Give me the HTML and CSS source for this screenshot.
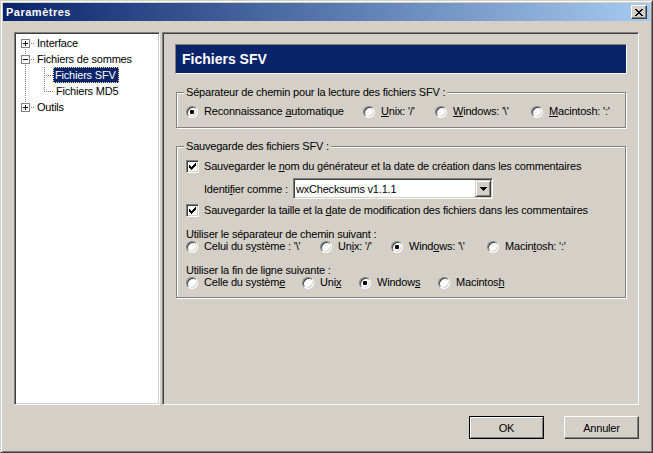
FILE: index.html
```html
<!DOCTYPE html>
<html lang="fr">
<head>
<meta charset="utf-8">
<title>Paramètres</title>
<link rel="stylesheet" href="styles.css">
</head>
<body>
<div class="window">
  <div class="titlebar">
    <span class="title">Paramètres</span>
    <button class="close" aria-label="Fermer"><svg width="8" height="7" viewBox="0 0 8 7" shape-rendering="crispEdges"><path fill="#000" d="M0 0h2v1H0z M6 0h2v1H6z M1 1h2v1H1z M5 1h2v1H5z M2 2h4v1H2z M3 3h2v1H3z M2 4h4v1H2z M1 5h2v1H1z M5 5h2v1H5z M0 6h2v1H0z M6 6h2v1H6z"/></svg></button>
  </div>
  <div class="client">
    <div class="main">
      <div class="tree">
        <div class="node">
          <span class="g lo hz"><span class="exp plus"></span></span>
          <span class="label">Interface</span>
        </div>
        <div class="node">
          <span class="g full hz"><span class="exp"></span></span>
          <span class="label">Fichiers de sommes</span>
        </div>
        <div class="node">
          <span class="g full"></span>
          <span class="g full hz"></span>
          <span class="label sel">Fichiers SFV</span>
        </div>
        <div class="node">
          <span class="g full"></span>
          <span class="g up hz"></span>
          <span class="label">Fichiers MD5</span>
        </div>
        <div class="node">
          <span class="g up hz"><span class="exp plus"></span></span>
          <span class="label">Outils</span>
        </div>
      </div>
      <div class="page">
        <div class="page-head">Fichiers SFV</div>
        <fieldset class="group g1">
          <legend>Séparateur de chemin pour la lecture des fichiers SFV :</legend>
          <div class="row">
            <label class="opt w177"><span class="radio on"></span><span>Reconnaissance <u>a</u>utomatique</span></label>
            <label class="opt w72"><span class="radio"></span><span><u>U</u>nix: '/'</span></label>
            <label class="opt w96"><span class="radio"></span><span><u>W</u>indows: '\'</span></label>
            <label class="opt"><span class="radio"></span><span><u>M</u>acintosh: ':'</span></label>
          </div>
        </fieldset>
        <fieldset class="group g2">
          <legend>Sauvegarde des fichiers SFV :</legend>
          <label class="opt cb1"><span class="check"><svg width="7" height="7" viewBox="0 0 7 7" shape-rendering="crispEdges"><path fill="#000" d="M6 0h1v1H6z M5 1h2v1H5z M0 2h1v1H0z M4 2h3v1H4z M0 3h2v1H0z M3 3h3v1H3z M0 4h5v1H0z M1 5h3v1H1z M2 6h1v1H2z"/></svg></span><span>Sauvegarder le <u>n</u>om du générateur et la date de création dans les commentaires</span></label>
          <div class="ident">
            <span class="ident-label">Identi<u>f</u>ier comme :</span>
            <div class="combo">
              <span class="combo-text">wxChecksums v1.1.1</span>
              <span class="combo-btn"><svg width="7" height="4" viewBox="0 0 7 4" shape-rendering="crispEdges"><path fill="#000" d="M0 0h7v1H0z M1 1h5v1H1z M2 2h3v1H2z M3 3h1v1H3z"/></svg></span>
            </div>
          </div>
          <label class="opt cb2"><span class="check"><svg width="7" height="7" viewBox="0 0 7 7" shape-rendering="crispEdges"><path fill="#000" d="M6 0h1v1H6z M5 1h2v1H5z M0 2h1v1H0z M4 2h3v1H4z M0 3h2v1H0z M3 3h3v1H3z M0 4h5v1H0z M1 5h3v1H1z M2 6h1v1H2z"/></svg></span><span>Sauvegarder la taille et la <u>d</u>ate de modification des fichiers dans les commentaires</span></label>
          <div class="caption cap1">Utiliser le séparateur de chemin suivant :</div>
          <div class="row">
            <label class="opt w134"><span class="radio"></span><span>Celui du s<u>y</u>stème : '\'</span></label>
            <label class="opt w71"><span class="radio"></span><span>Un<u>i</u>x: '/'</span></label>
            <label class="opt w96"><span class="radio on"></span><span>Wind<u>o</u>ws: '\'</span></label>
            <label class="opt"><span class="radio"></span><span>Macin<u>t</u>osh: ':'</span></label>
          </div>
          <div class="caption cap2">Utiliser la fin de ligne suivante :</div>
          <div class="row">
            <label class="opt w116"><span class="radio"></span><span>Celle du systèm<u>e</u></span></label>
            <label class="opt w57"><span class="radio"></span><span>Uni<u>x</u></span></label>
            <label class="opt w79"><span class="radio on"></span><span>Window<u>s</u></span></label>
            <label class="opt"><span class="radio"></span><span>Macintos<u>h</u></span></label>
          </div>
        </fieldset>
      </div>
    </div>
    <div class="buttons">
      <button class="btn default">OK</button>
      <button class="btn">Annuler</button>
    </div>
  </div>
</div>
</body>
</html>
```
FILE: styles.css
```css
* { box-sizing: border-box; }
html, body { margin: 0; padding: 0; background: #D4D0C8; }
body {
  font-family: "Liberation Sans", Arial, sans-serif;
  font-size: 11px;
  letter-spacing: -0.2px;
  color: #000;
}
u { text-decoration: underline; text-underline-offset: 1px; }

.window {
  width: 653px;
  height: 453px;
  border: 1px solid;
  border-color: #D4D0C8 #404040 #404040 #D4D0C8;
  box-shadow: inset 1px 1px 0 #fff, inset -1px -1px 0 #808080;
  padding: 2px;
  background: #D4D0C8;
  display: flex;
  flex-direction: column;
}

.titlebar {
  height: 18px;
  flex: none;
  display: flex;
  align-items: center;
  justify-content: space-between;
  padding: 0 3px 0 3px;
  background: linear-gradient(to right, #0A246A, #A6CAF0);
}
.title {
  color: #fff;
  font-weight: bold;
  letter-spacing: 0.5px;
  line-height: 13px;
  margin-top: 1px;
}
.close {
  width: 16px;
  height: 14px;
  padding: 0;
  border: 1px solid;
  border-color: #fff #404040 #404040 #fff;
  box-shadow: inset -1px -1px 0 #808080;
  background: #D4D0C8;
  display: flex;
  align-items: center;
  justify-content: center;
}
.close svg { display: block; margin: 0 1px 0 0; }

.client {
  flex: 1;
  padding: 11px;
  display: flex;
  flex-direction: column;
  gap: 11px;
}
.main {
  display: flex;
  gap: 2px;
  height: 373px;
  flex: none;
}

/* tree */
.tree {
  width: 146px;
  flex: none;
  background: #fff;
  border: 1px solid;
  border-color: #808080 #fff #fff #808080;
  box-shadow: inset 1px 1px 0 #404040, inset -1px -1px 0 #D4D0C8;
  padding: 2px 1px 1px 1px;
}
.node {
  display: flex;
  height: 16px;
  align-items: stretch;
}
.g {
  --v: none;
  --h: none;
  --vp: 9px 0;
  --vs: 1px 16px;
  width: 19px;
  height: 16px;
  flex: none;
  display: block;
  background-image: var(--v), var(--h);
  background-repeat: no-repeat, no-repeat;
  background-position: var(--vp), 9px 8px;
  background-size: var(--vs), 10px 1px;
}
.g.hz { --h: repeating-linear-gradient(to right, #808080 0 1px, transparent 1px 2px); }
.g.full { --v: repeating-linear-gradient(to bottom, #808080 0 1px, transparent 1px 2px); }
.g.lo { --v: repeating-linear-gradient(to bottom, #808080 0 1px, transparent 1px 2px); --vp: 9px 8px; --vs: 1px 8px; }
.g.up { --v: repeating-linear-gradient(to bottom, #808080 0 1px, transparent 1px 2px); --vs: 1px 8px; }
.exp {
  display: block;
  width: 9px;
  height: 9px;
  margin: 4px 0 0 5px;
  border: 1px solid #808080;
  background: linear-gradient(#000, #000) center / 5px 1px no-repeat, #fff;
}
.exp.plus {
  background: linear-gradient(#000, #000) center / 5px 1px no-repeat,
              linear-gradient(#000, #000) center / 1px 5px no-repeat, #fff;
}
.label {
  padding: 0 2px;
  line-height: 16px;
  white-space: nowrap;
}
.label.sel {
  margin-left: -1px;
  padding: 0 3px 0 2px;
  background: #0A246A;
  color: #fff;
  outline: 1px dotted #F5DB95;
  outline-offset: -1px;
}

/* page */
.page {
  flex: 1;
  border: 1px solid;
  border-color: #808080 #fff #fff #808080;
  box-shadow: inset 1px 1px 0 #404040, inset -1px -1px 0 #D4D0C8;
  padding: 11px 11px 0 12px;
}
.page-head {
  height: 30px;
  border: 1px solid;
  border-color: #808080 #fff #fff #808080;
  background: #0A246A;
  color: #fff;
  font-weight: bold;
  font-size: 14px;
  letter-spacing: 0;
  padding-left: 6px;
  display: flex;
  align-items: center;
}

.group {
  margin: 12px 1px 0 1px;
  min-width: 0;
  border: 1px solid #808080;
  box-shadow: inset 1px 1px 0 #fff, 1px 1px 0 #fff;
  padding: 6px 9px 9px 9px;
}
.group legend {
  padding: 0 2px;
  margin-left: -2px;
  line-height: 13px;
  background: #D4D0C8;
}
.g2 { padding: 7px 9px 8px 9px; }

.row {
  display: flex;
  height: 13px;
  align-items: center;
}
.opt {
  display: flex;
  align-items: center;
  gap: 6px;
  height: 13px;
  line-height: 13px;
  white-space: nowrap;
  flex: none;
}
.w177 { width: 177px; }
.w72 { width: 72px; }
.w96 { width: 96px; }
.w134 { width: 134px; }
.w71 { width: 71px; }
.w116 { width: 116px; }
.w57 { width: 57px; }
.w79 { width: 79px; }

.radio {
  width: 12px;
  height: 12px;
  flex: none;
  border-radius: 50%;
  border: 1px solid;
  border-color: #808080 #fff #fff #808080;
  box-shadow: inset 1px 1px 0 #404040, inset -1px -1px 0 #D4D0C8;
  background: #fff;
  display: flex;
  align-items: center;
  justify-content: center;
}
.radio.on::after {
  content: "";
  width: 4px;
  height: 4px;
  border-radius: 1px;
  background: #000;
}

.check {
  width: 13px;
  height: 13px;
  flex: none;
  border: 1px solid;
  border-color: #808080 #fff #fff #808080;
  box-shadow: inset 1px 1px 0 #404040, inset -1px -1px 0 #D4D0C8;
  background: #fff;
  padding: 2px;
}
.check svg { display: block; }
.opt.cb1, .opt.cb2 { gap: 5px; }
.cb2 { margin-top: 5px; }

.ident {
  display: flex;
  align-items: center;
  margin-top: 5px;
  padding-left: 18px;
  height: 21px;
}
.ident-label { width: 89px; flex: none; white-space: nowrap; }
.combo {
  width: 200px;
  height: 21px;
  flex: none;
  display: flex;
  align-items: center;
  background: #fff;
  border: 1px solid;
  border-color: #808080 #fff #fff #808080;
  box-shadow: inset 1px 1px 0 #404040, inset -1px -1px 0 #D4D0C8;
  padding: 1px;
}
.combo-text { padding-left: 1px; flex: 1; white-space: nowrap; }
.combo-btn {
  width: 16px;
  height: 17px;
  flex: none;
  border: 1px solid;
  border-color: #D4D0C8 #404040 #404040 #D4D0C8;
  box-shadow: inset 1px 1px 0 #fff, inset -1px -1px 0 #808080;
  background: #D4D0C8;
  display: flex;
  align-items: center;
  justify-content: center;
}
.combo-btn svg { display: block; }

.caption { line-height: 11px; height: 11px; white-space: nowrap; }
.cap1 { margin-top: 12px; }
.cap2 { margin-top: 12px; }

.buttons {
  display: flex;
  justify-content: flex-end;
  gap: 20px;
}
.btn {
  width: 75px;
  height: 23px;
  padding: 0;
  font: inherit;
  letter-spacing: inherit;
  color: #000;
  background: #D4D0C8;
  border: 1px solid;
  border-color: #fff #404040 #404040 #fff;
  box-shadow: inset -1px -1px 0 #808080;
}
.btn.default {
  border-color: #000;
  box-shadow: inset 1px 1px 0 #fff, inset -1px -1px 0 #808080;
}
```
